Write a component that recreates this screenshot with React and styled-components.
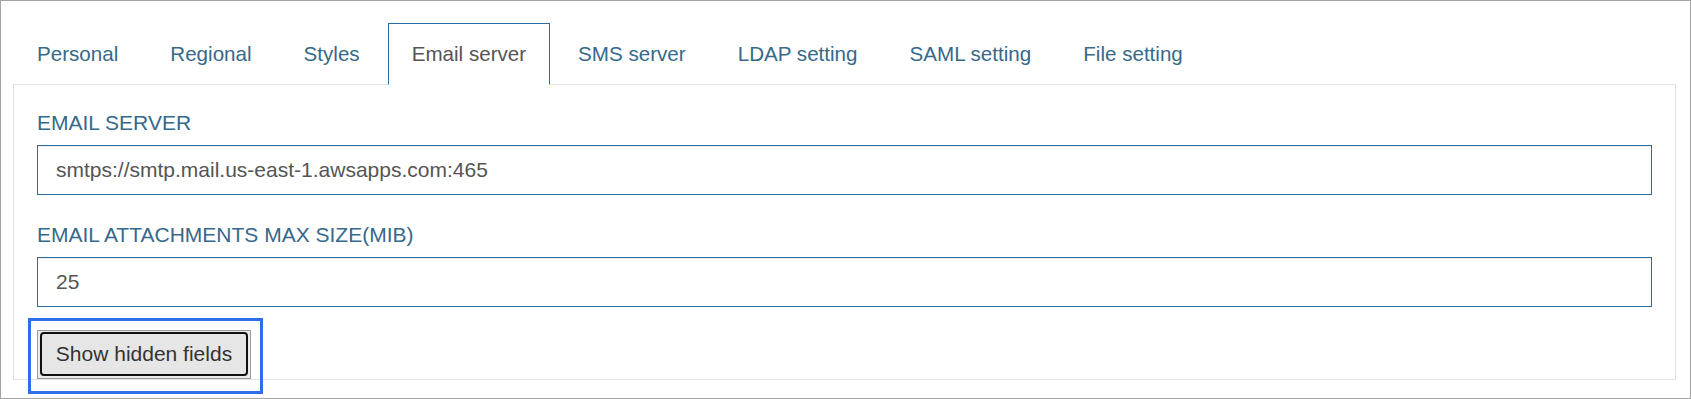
import React from "react";
import styled, { createGlobalStyle } from "styled-components";

const Global = createGlobalStyle`
  html, body { margin: 0; padding: 0; background: #fff; }
  body { font-family: "Liberation Sans", Arial, sans-serif; }
  * { box-sizing: border-box; }
`;

const Frame = styled.div`
  width: 1691px;
  height: 399px;
  border: 1px solid #a3a3a3;
  padding: 22px 14px 0 12px;
  background: #fff;
  font-family: "Liberation Sans", Arial, sans-serif;
`;

const TabList = styled.div`
  display: flex;
  align-items: flex-end;
  margin-bottom: -1px;
  position: relative;
  z-index: 1;
`;

const Tab = styled.div`
  padding: 18px 23px;
  margin-right: 4px;
  line-height: 24px;
  font-size: 20.6px;
  white-space: nowrap;
  border: 1px solid ${(p) => (p.$active ? "#2e6da4" : "transparent")};
  border-bottom-color: ${(p) => (p.$active ? "#fff" : "transparent")};
  background: ${(p) => (p.$active ? "#fff" : "transparent")};
  color: ${(p) => (p.$active ? "#555" : "#36698a")};
  cursor: pointer;
`;

const Panel = styled.div`
  border: 1px solid #e3e3e3;
  padding: 26px 23px 0 23px;
  background: #fff;
`;

const Field = styled.div`
  margin-bottom: ${(p) => p.$gap}px;
`;

const Label = styled.div`
  font-size: 21px;
  line-height: 24px;
  color: #36698a;
  text-transform: uppercase;
  margin-bottom: 10px;
`;

const Input = styled.input`
  display: block;
  width: 100%;
  height: 50px;
  border: 1px solid #2e6da4;
  padding: 0 18px;
  font-family: "Liberation Sans", Arial, sans-serif;
  font-size: 21px;
  color: #555;
  background: #fff;
  box-shadow: inset 0 1px 1px rgba(0, 0, 0, 0.075);
  outline: none;
`;

const ButtonBox = styled.div`
  position: relative;
  width: 214px;
  height: 49px;
  border: 1px solid #9a9a9a;
  padding: 1px 2px 2px 2px;
  background: #ececec;

  &::after {
    content: "";
    position: absolute;
    top: -13px;
    left: -10px;
    right: -13px;
    bottom: -16px;
    border: 3px solid #2f6deb;
    pointer-events: none;
  }
`;

const Button = styled.button`
  width: 100%;
  height: 100%;
  border: 2px solid #111;
  border-radius: 4px;
  background: #e6e6e6;
  color: #333;
  font-family: "Liberation Sans", Arial, sans-serif;
  font-size: 21px;
  padding: 0;
  cursor: pointer;
`;

const tabs = [
  "Personal",
  "Regional",
  "Styles",
  "Email server",
  "SMS server",
  "LDAP setting",
  "SAML setting",
  "File setting",
];

export default function App() {
  return (
    <>
      <Global />
      <Frame>
        <TabList>
          {tabs.map((t) => (
            <Tab key={t} $active={t === "Email server"}>
              {t}
            </Tab>
          ))}
        </TabList>
        <Panel>
          <Field $gap={28}>
            <Label>Email server</Label>
            <Input defaultValue="smtps://smtp.mail.us-east-1.awsapps.com:465" />
          </Field>
          <Field $gap={23}>
            <Label>Email attachments max size(MiB)</Label>
            <Input defaultValue="25" />
          </Field>
          <ButtonBox>
            <Button>Show hidden fields</Button>
          </ButtonBox>
        </Panel>
      </Frame>
    </>
  );
}
